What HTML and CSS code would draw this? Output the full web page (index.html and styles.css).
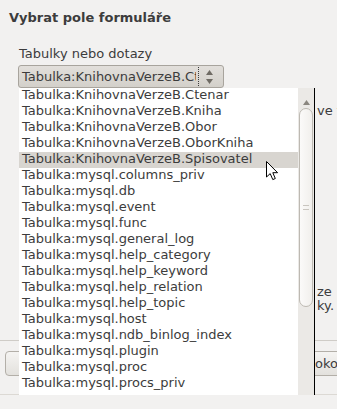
FILE: index.html
```html
<!DOCTYPE html>
<html lang="cs">
<head>
<meta charset="utf-8">
<title>Vybrat pole formuláře</title>
<link rel="stylesheet" href="styles.css">
</head>
<body>
<div class="dialog">
  <h1 class="title">Vybrat pole formuláře</h1>
  <div class="label">Tabulky nebo dotazy</div>
  <div class="combo">
    <span class="combo-text">Tabulka:KnihovnaVerzeB.Ctenar</span>
    <span class="combo-sep"></span>
    <span class="combo-arrows">
      <svg width="9" height="16" viewBox="0 0 9 16"><path d="M4.5 1 L8 6 L1 6 Z" fill="#6f6b64"/><path d="M4.5 15 L8 10 L1 10 Z" fill="#6f6b64"/></svg>
    </span>
  </div>
  <div class="frag frag-top">ve t</div>
  <div class="panel">
    <div class="frag">ze</div>
    <div class="frag">ky.</div>
  </div>
  <div class="separator"></div>
  <div class="buttons">
    <div class="btn btn-left"></div>
    <div class="btn btn-right">Dokončit</div>
  </div>
  <div class="bottom"></div>
</div>

<div class="popup">
  <ul class="list">
    <li>Tabulka:KnihovnaVerzeB.Ctenar</li>
    <li>Tabulka:KnihovnaVerzeB.Kniha</li>
    <li>Tabulka:KnihovnaVerzeB.Obor</li>
    <li>Tabulka:KnihovnaVerzeB.OborKniha</li>
    <li class="sel">Tabulka:KnihovnaVerzeB.Spisovatel</li>
    <li>Tabulka:mysql.columns_priv</li>
    <li>Tabulka:mysql.db</li>
    <li>Tabulka:mysql.event</li>
    <li>Tabulka:mysql.func</li>
    <li>Tabulka:mysql.general_log</li>
    <li>Tabulka:mysql.help_category</li>
    <li>Tabulka:mysql.help_keyword</li>
    <li>Tabulka:mysql.help_relation</li>
    <li>Tabulka:mysql.help_topic</li>
    <li>Tabulka:mysql.host</li>
    <li>Tabulka:mysql.ndb_binlog_index</li>
    <li>Tabulka:mysql.plugin</li>
    <li>Tabulka:mysql.proc</li>
    <li>Tabulka:mysql.procs_priv</li>
  </ul>
  <div class="scrollbar">
    <svg class="arrow-up" width="7" height="5" viewBox="0 0 7 5"><path d="M3.5 0 L7 5 L0 5 Z" fill="#8a867f"/></svg>
    <div class="thumb"><span class="grip"></span></div>
  </div>
</div>

<svg class="cursor" width="13" height="20" viewBox="0 0 13 20"><path d="M0.5 0.5 L0.5 16 L4.2 12.6 L6.8 18.6 L9.3 17.5 L6.8 11.7 L11.6 11.7 Z" fill="#fff" stroke="#000" stroke-width="1" stroke-linejoin="miter"/></svg>
</body>
</html>
```

FILE: styles.css
```css
html, body {
  margin: 0;
  padding: 0;
}
body {
  width: 337px;
  height: 409px;
  overflow: hidden;
  background: #f2f1f0;
  font-family: "DejaVu Sans", sans-serif;
  font-size: 13px;
  color: #3c3c3c;
  position: relative;
}
.dialog {
  display: flex;
  flex-direction: column;
  width: 337px;
  overflow: hidden;
}
.title {
  margin: 10px 0 0 9px;
  font-size: 13px;
  font-weight: bold;
  line-height: 16px;
  color: #3c3c3c;
}
.label {
  margin: 20px 0 0 19px;
  line-height: 16px;
}
.combo {
  margin: 3px 0 0 18px;
  width: 204px;
  height: 21px;
  border: 1px solid #a8a49d;
  border-radius: 3px;
  background: linear-gradient(#e2dfdb, #d3d0ca);
  display: flex;
  align-items: center;
  overflow: hidden;
}
.combo-text {
  flex: none;
  width: 174px;
  padding-left: 3px;
  margin-right: 2px;
  white-space: nowrap;
  overflow: hidden;
  line-height: 16px;
}
.combo-sep {
  flex: none;
  width: 0;
  height: 19px;
  border-left: 1px dotted #3c3c3c;
}
.combo-arrows {
  display: flex;
  align-items: center;
  margin-left: 6px;
}
.frag {
  padding-left: 317px;
  white-space: nowrap;
  overflow: hidden;
  line-height: 14px;
}
.frag-top {
  margin-top: 15px;
  line-height: 16px;
}
.panel {
  margin-top: 166px;
}
.separator {
  margin-top: 27px;
  height: 1px;
  background: #cfccc7;
}
.buttons {
  margin-top: 10px;
  display: flex;
  height: 25px;
}
.btn {
  flex: none;
  box-sizing: border-box;
  height: 25px;
  border: 1px solid #b3afa8;
  border-radius: 4px;
  background: linear-gradient(#f5f4f2, #e3e1dd);
  line-height: 23px;
  white-space: nowrap;
}
.btn-left {
  margin-left: 5px;
  width: 90px;
}
.btn-right {
  margin-left: 193px;
  width: 100px;
  padding-left: 16px;
}
.bottom {
  margin-top: 18px;
  height: 1px;
  background: #dcd9d4;
}

/* dropdown popup lies over the dialog */
.popup {
  position: absolute;
  left: 19px;
  top: 88px;
  height: 307px;
  display: flex;
  background: #fff;
  border-right: 1px solid #000;
}
.list {
  list-style: none;
  margin: 0;
  padding: 0;
  width: 279px;
  overflow: hidden;
}
.list li {
  height: 16px;
  line-height: 14px;
  padding-left: 3px;
  white-space: nowrap;
}
.list li.sel {
  background: #d8d5d0;
}
.scrollbar {
  width: 16px;
  background: #ebe9e6;
  display: flex;
  flex-direction: column;
  align-items: center;
}
.arrow-up {
  margin-top: 12px;
}
.thumb {
  margin-top: 3px;
  box-sizing: border-box;
  width: 14px;
  height: 199px;
  border: 1px solid #bdb9b2;
  border-radius: 7px;
  background: linear-gradient(90deg, #fbfaf9, #f1efec);
  display: flex;
  align-items: center;
  justify-content: center;
}
.grip {
  width: 6px;
  height: 5px;
  border-top: 1px solid #c9c5bf;
  border-bottom: 1px solid #c9c5bf;
  box-sizing: border-box;
}
.cursor {
  position: absolute;
  left: 266px;
  top: 161px;
}
```
